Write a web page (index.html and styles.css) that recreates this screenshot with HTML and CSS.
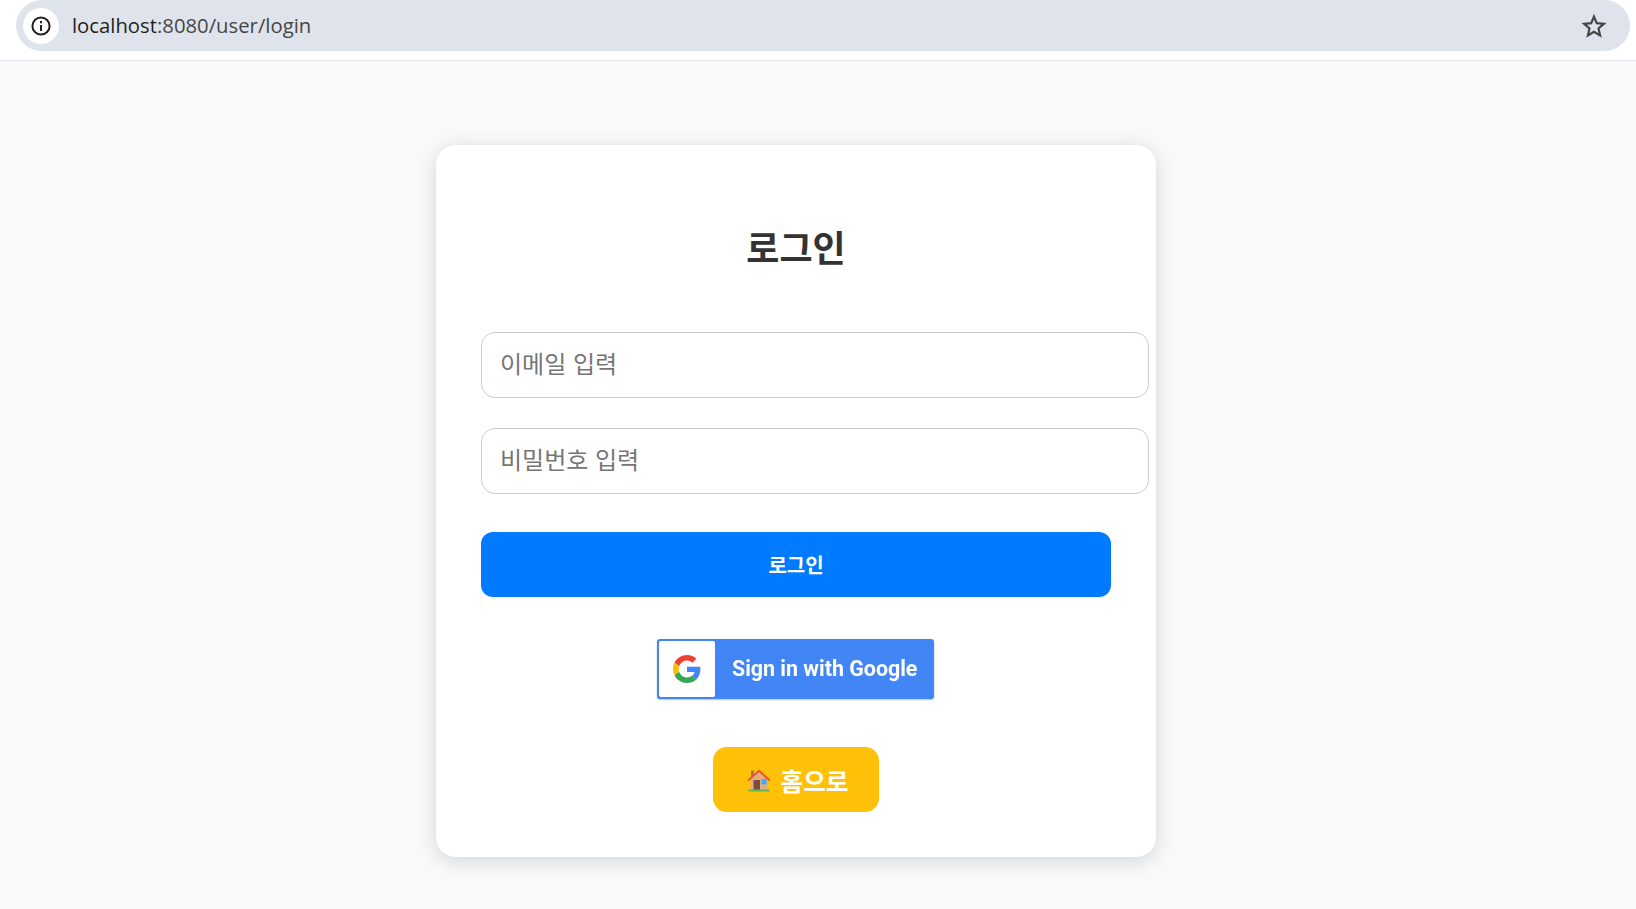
FILE: index.html
```html
<!DOCTYPE html>
<html lang="ko">
<head>
  <meta charset="UTF-8" />
  <meta name="viewport" content="width=device-width, initial-scale=1.0"/>
  <title>로그인</title>
  <link rel="stylesheet" href="styles.css">
</head>
<body>

<!-- Browser address bar -->
<header class="browser-bar">
  <div class="omnibox">
    <span class="site-info">
      <svg width="22" height="22" viewBox="0 0 22 22" fill="none" stroke="#1f1f1f" stroke-width="2">
        <circle cx="11" cy="11" r="8.6"/>
        <path d="M11 10v6"/>
        <path d="M11 6v2.2"/>
      </svg>
    </span>
    <span class="url"><span class="host">localhost</span>:8080/user/login</span>
    <svg class="star" width="26" height="26" viewBox="0 0 26 26" fill="none" stroke="#444746" stroke-width="2.2" stroke-linejoin="miter">
      <path d="M13 3.6l2.8 6.6 7.1.6-5.4 4.7 1.6 7-6.1-3.7-6.1 3.7 1.6-7-5.4-4.7 7.1-.6z"/>
    </svg>
  </div>
</header>

<!-- Login Page -->
<main class="page">
  <section class="card">
    <h2 class="title">로그인</h2>
    <input class="field" type="email" placeholder="이메일 입력" />
    <input class="field" type="password" placeholder="비밀번호 입력" />
    <button class="login-btn">로그인</button>

    <a class="google-btn" href="#">
      <span class="google-mark">
        <svg width="28" height="28" viewBox="0 0 48 48">
          <path fill="#EA4335" d="M24 9.5c3.54 0 6.71 1.22 9.21 3.6l6.85-6.85C35.9 2.38 30.47 0 24 0 14.62 0 6.51 5.38 2.56 13.22l7.98 6.19C12.43 13.72 17.74 9.5 24 9.5z"/>
          <path fill="#4285F4" d="M46.98 24.55c0-1.57-.15-3.09-.38-4.55H24v9.02h12.94c-.58 2.96-2.26 5.48-4.78 7.18l7.73 6c4.51-4.18 7.09-10.36 7.09-17.65z"/>
          <path fill="#FBBC05" d="M10.53 28.59c-.48-1.45-.76-2.99-.76-4.59s.27-3.14.76-4.59l-7.98-6.19C.92 16.46 0 20.12 0 24c0 3.88.92 7.54 2.56 10.78l7.97-6.19z"/>
          <path fill="#34A853" d="M24 48c6.48 0 11.93-2.13 15.89-5.81l-7.73-6c-2.15 1.45-4.92 2.3-8.16 2.3-6.26 0-11.57-4.22-13.47-9.91l-7.98 6.19C6.51 42.62 14.62 48 24 48z"/>
        </svg>
      </span>
      <span class="google-text">Sign in with Google</span>
    </a>

    <button class="home-btn">
      <svg class="home-icon" width="26" height="26" viewBox="0 0 26 26">
        <rect x="5" y="3.5" width="3" height="7" fill="#b5714f"/>
        <path d="M4.5 11L13 3.5 21.5 11v12h-17z" fill="#e3ad7c"/>
        <path d="M1.5 13L13 2.5 24.5 13l-1.2 1.3L13 5 2.7 14.3z" fill="#e2502f"/>
        <rect x="7.5" y="13" width="6.5" height="10" fill="#7d4a3e"/>
        <rect x="15.5" y="12" width="5" height="5.5" fill="#3fa9f5"/>
        <rect x="2.5" y="22.5" width="21" height="2" fill="#5cb85c"/>
      </svg>
      홈으로
    </button>
  </section>
</main>

</body>
</html>
```

FILE: styles.css
```css
* {
  box-sizing: border-box;
}

body {
  font-family: "Noto Sans CJK KR", "Noto Sans", sans-serif;
  margin: 0;
  min-height: 909px;
  background-color: #f8f9fa;
  color: #333;
}

/* browser chrome */
.browser-bar {
  height: 61px;
  padding: 0 6px 0 16px;
  background-color: #fff;
  border-bottom: 1px solid #e3e5e8;
}

.omnibox {
  display: flex;
  align-items: center;
  height: 51px;
  padding: 0 23px 0 7px;
  background-color: #dfe3eb;
  border-radius: 26px;
}

.site-info {
  display: flex;
  align-items: center;
  justify-content: center;
  width: 36px;
  height: 36px;
  background-color: #fff;
  border-radius: 50%;
}

.url {
  flex: 1;
  margin: 0 0 2px 13px;
  font-family: "Open Sans", sans-serif;
  font-size: 20.3px;
  color: #444746;
}

.host {
  color: #1f1f1f;
}

/* login card */
.page {
  display: flex;
  justify-content: center;
  width: 1592px;
  padding-top: 84px;
}

.card {
  display: flex;
  flex-direction: column;
  align-items: center;
  width: 720px;
  height: 712px;
  padding: 74px 45px 45px;
  background-color: #fff;
  border-radius: 20px;
  box-shadow: 0 4px 20px rgba(0, 0, 0, 0.15);
}

.title {
  margin: 0 0 59px;
  font-size: 36px;
  line-height: 54px;
  font-weight: 700;
  color: #333;
}

.field {
  display: block;
  align-self: flex-start;
  flex: none;
  width: 668px;
  height: 66px;
  margin-bottom: 30px;
  padding: 0 18px 5px;
  font-family: inherit;
  font-size: 24px;
  background: #fff;
  border: 1px solid #ccc;
  border-radius: 14px;
}

.field::placeholder {
  color: #757575;
}

.login-btn {
  width: 630px;
  height: 65px;
  margin-top: 8px;
  padding: 0;
  font-family: inherit;
  font-size: 20px;
  font-weight: 700;
  color: #fff;
  background-color: #007bff;
  border: none;
  border-radius: 12px;
  cursor: pointer;
}

/* the button is a scaled image in the original, hence the slight blur */
.google-btn {
  display: flex;
  align-items: center;
  width: 277px;
  height: 60px;
  margin: 42px 1px 0 0;
  background-color: #4285f4;
  border: 2px solid #4285f4;
  border-radius: 3px;
  box-shadow: 0 1px 2px rgba(0, 0, 0, 0.25);
  text-decoration: none;
  filter: blur(0.5px);
}

.google-mark {
  display: flex;
  align-items: center;
  justify-content: center;
  width: 56px;
  height: 100%;
  background-color: #fff;
  border-radius: 2px;
}

.google-text {
  margin: 0 0 2px 17px;
  font-family: Roboto, sans-serif;
  font-size: 21.4px;
  font-weight: 700;
  color: #fff;
  white-space: nowrap;
}

.home-btn {
  display: flex;
  align-items: center;
  justify-content: center;
  gap: 9px;
  width: 166px;
  height: 65px;
  margin-top: 48px;
  padding: 0 0 0 2px;
  font-family: inherit;
  font-size: 24.6px;
  font-weight: 700;
  color: #fff;
  background-color: #ffc107;
  border: none;
  border-radius: 14px;
  cursor: pointer;
}
```
